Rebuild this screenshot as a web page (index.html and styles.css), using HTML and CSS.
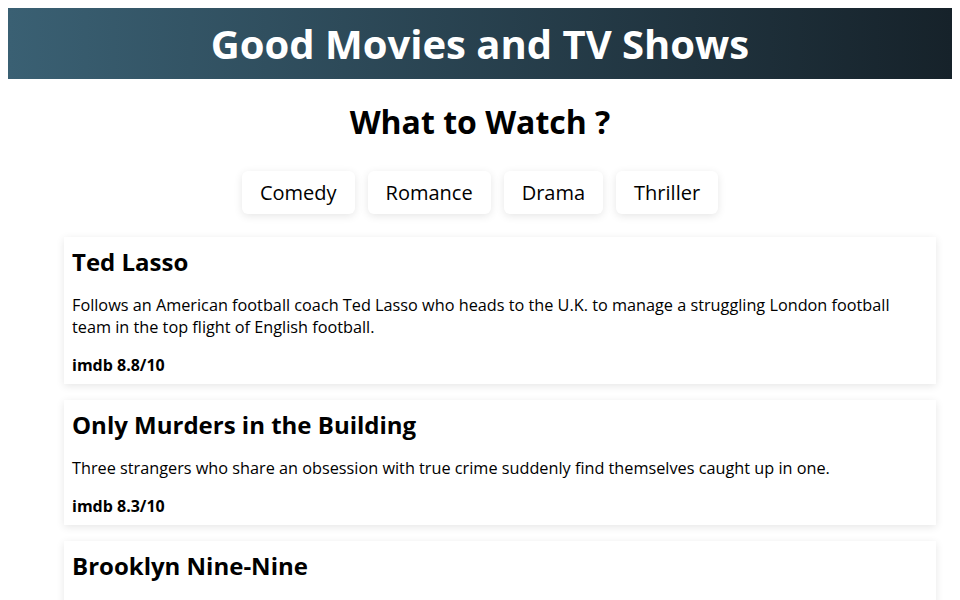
FILE: index.html
```html
<!DOCTYPE html>
<html lang="en">
<head>
<meta charset="utf-8">
<title>Good Movies and TV Shows</title>
<link rel="stylesheet" href="styles.css">
</head>
<body>
<header class="banner">
  <h1 class="banner-title">Good Movies and TV Shows</h1>
</header>
<main class="content">
  <h2 class="subtitle">What to Watch ?</h2>
  <nav class="genres">
    <button class="genre">Comedy</button>
    <button class="genre">Romance</button>
    <button class="genre">Drama</button>
    <button class="genre">Thriller</button>
  </nav>
  <section class="list">
    <article class="card">
      <h3 class="card-title">Ted Lasso</h3>
      <p class="card-desc">Follows an American football coach Ted Lasso who heads to the U.K. to manage a struggling London football team in the top flight of English football.</p>
      <p class="card-rating">imdb 8.8/10</p>
    </article>
    <article class="card">
      <h3 class="card-title">Only Murders in the Building</h3>
      <p class="card-desc">Three strangers who share an obsession with true crime suddenly find themselves caught up in one.</p>
      <p class="card-rating">imdb 8.3/10</p>
    </article>
    <article class="card">
      <h3 class="card-title">Brooklyn Nine-Nine</h3>
      <p class="card-desc">Comedy series following the exploits of Det. Jake Peralta and his diverse, lovable colleagues as they police the NYPD's 99th Precinct.</p>
      <p class="card-rating">imdb 8.4/10</p>
    </article>
  </section>
</main>
</body>
</html>
```

FILE: styles.css
```css
body {
  margin: 8px;
  font-family: "Open Sans", sans-serif;
  color: #000;
  background: #fff;
}
.banner {
  background: linear-gradient(to right, #3a6073, #16222a);
  padding: 8px 0;
}
.banner-title {
  margin: 0;
  text-align: center;
  color: #fff;
  font-size: 40px;
  font-weight: 700;
  line-height: 55px;
}
.content {
  display: flex;
  flex-direction: column;
  align-items: center;
}
.subtitle {
  margin: 21px 0 0;
  font-size: 32px;
  font-weight: 700;
  line-height: 44px;
}
.genres {
  display: flex;
  gap: 13px;
  margin-top: 27px;
}
.genre {
  font-family: "Open Sans", sans-serif;
  font-size: 20px;
  color: #000;
  background: #fff;
  border: none;
  border-radius: 6px;
  padding: 8px 18px;
  line-height: 27px;
  box-shadow: 0 2px 8px rgba(0, 0, 0, 0.1);
}
.list {
  align-self: stretch;
  display: flex;
  flex-direction: column;
  gap: 16px;
  margin: 23px 16px 0 56px;
}
.card {
  background: #fff;
  box-shadow: 0 2px 8px rgba(0, 0, 0, 0.1);
  padding: 8px;
}
.card-title {
  margin: 0;
  font-size: 24px;
  font-weight: 700;
  line-height: 34px;
}
.card-desc {
  margin: 15px 0 0;
  font-size: 16.25px;
  line-height: 22px;
}
.card-rating {
  margin: 16px 0 0;
  font-size: 16px;
  font-weight: 700;
  line-height: 22px;
}
```
